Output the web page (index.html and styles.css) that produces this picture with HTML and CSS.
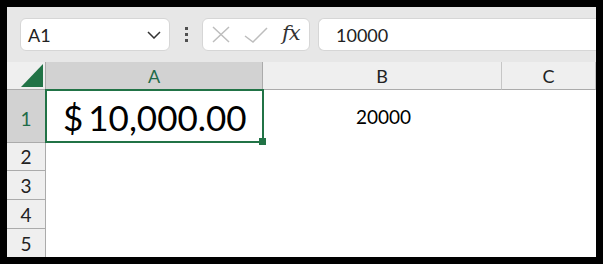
FILE: index.html
```html
<!DOCTYPE html>
<html>
<head>
<meta charset="utf-8">
<link rel="stylesheet" href="styles.css">
</head>
<body>
<div class="app">
  <div class="toolbar">
    <div class="namebox">
      <span class="name">A1</span>
      <svg class="chev" width="14" height="8" viewBox="0 0 14 8"><polyline points="1,1 7,7 13,1" fill="none" stroke="#333" stroke-width="1.5"/></svg>
    </div>
    <div class="dots"><span></span><span></span><span></span></div>
    <div class="fxbox">
      <svg width="18" height="17" viewBox="0 0 18 17"><path d="M1 1 L17 16 M17 1 L1 16" stroke="#bdbdbd" stroke-width="1.5" fill="none"/></svg>
      <svg width="24" height="16" viewBox="0 0 24 16"><polyline points="1,9 9,15 23,1" stroke="#bdbdbd" stroke-width="1.5" fill="none"/></svg>
      <span class="fx">fx</span>
    </div>
    <div class="formula">10000</div>
  </div>
  <div class="grid">
    <div class="corner"><div class="tri"></div></div>
    <div class="colhead sel">A</div>
    <div class="colhead">B</div>
    <div class="colhead">C</div>

    <div class="rowhead sel r1">1</div>
    <div class="cell a1"><span>$</span><span>10,000.00</span></div>
    <div class="cell b1">20000</div>
    <div class="cell"></div>

    <div class="rowhead">2</div><div class="cell"></div><div class="cell"></div><div class="cell"></div>
    <div class="rowhead">3</div><div class="cell"></div><div class="cell"></div><div class="cell"></div>
    <div class="rowhead">4</div><div class="cell"></div><div class="cell"></div><div class="cell"></div>
    <div class="rowhead last">5</div><div class="cell"></div><div class="cell"></div><div class="cell"></div>
  </div>
</div>
</body>
</html>
```
FILE: styles.css
```css
* { box-sizing: border-box; }
html, body { margin: 0; padding: 0; }
body {
  width: 603px;
  height: 264px;
  background: #000;
  padding: 7px 7px 7px 7px;
  font-family: Lato, "Open Sans", sans-serif;
  overflow: hidden;
}
.app {
  width: 589px;
  height: 250px;
  background: #fff;
  overflow: hidden;
}
.toolbar {
  height: 55px;
  background: #e7e7e7;
  display: flex;
  align-items: center;
  padding-left: 13px;
}
.namebox {
  width: 150px;
  height: 33px;
  background: #fff;
  border: 1px solid #d6d6d6;
  border-radius: 6px;
  display: flex;
  align-items: center;
  justify-content: space-between;
  padding: 0 8px 0 7px;
}
.name { font-size: 18px; color: #222; }
.chev { margin-top: 1px; }
.dots {
  width: 32px;
  display: flex;
  flex-direction: column;
  align-items: center;
  gap: 3px;
}
.dots span {
  width: 3px;
  height: 3px;
  background: #505050;
}
.fxbox {
  width: 108px;
  height: 33px;
  background: #fff;
  border: 1px solid #d6d6d6;
  border-radius: 6px;
  display: flex;
  align-items: center;
  padding-left: 9px;
  gap: 14px;
}
.fx {
  font-family: "DejaVu Serif", "Liberation Serif", serif;
  font-style: italic;
  font-size: 21px;
  color: #333;
  margin-left: 0px;
  margin-top: -3px;
  letter-spacing: -1px;
}
.formula {
  flex: 1;
  margin-left: 8px;
  height: 33px;
  background: #fff;
  border: 1px solid #d6d6d6;
  border-right: none;
  border-radius: 6px 0 0 6px;
  display: flex;
  align-items: center;
  padding-left: 17px;
  font-size: 18px;
  color: #222;
}
.grid {
  display: grid;
  grid-template-columns: 39px 217px 239px 94px;
  grid-template-rows: 28px 53px 28px 29px 29px 28px;
}
.corner {
  background: #efefef;
  border-bottom: 1px solid #ababab;
  border-right: 1px solid #ababab;
  position: relative;
}
.tri {
  position: absolute;
  right: 2px;
  bottom: 2px;
  width: 0;
  height: 0;
  border-left: 22px solid transparent;
  border-bottom: 23px solid #217346;
}
.colhead {
  background: #efefef;
  border-bottom: 1px solid #ababab;
  border-right: 1px solid #c6c6c6;
  display: flex;
  align-items: center;
  justify-content: center;
  font-size: 18px;
  color: #222;
}
.colhead:last-child { border-right: none; }
.colhead.sel { background: #d2d2d2; color: #1e6b49; border-right: 1px solid #ababab; }
.rowhead {
  background: #efefef;
  border-right: 1px solid #ababab;
  border-bottom: 1px solid #ababab;
  display: flex;
  align-items: center;
  justify-content: center;
  font-size: 19px;
  color: #222;
}
.rowhead.sel { background: #d2d2d2; color: #1e6b49; padding-top: 4px; }
.rowhead.last { border-bottom: none; }
.cell { background: #fff; }
.a1 {
  position: relative;
  display: flex;
  align-items: center;
  padding-left: 17px;
  gap: 5px;
  font-size: 35px;
  color: #000;
  padding-top: 1px;
}
.a1::after {
  content: "";
  position: absolute;
  left: -1px;
  top: -1px;
  right: -1px;
  bottom: 0;
  border: 2px solid #217346;
}
.a1::before {
  content: "";
  position: absolute;
  width: 7px;
  height: 7px;
  right: -3px;
  bottom: -2px;
  background: #217346;
  z-index: 2;
}
.b1 {
  display: flex;
  align-items: center;
  justify-content: center;
  font-size: 19px;
  color: #000;
  padding-left: 2px;
}
```
